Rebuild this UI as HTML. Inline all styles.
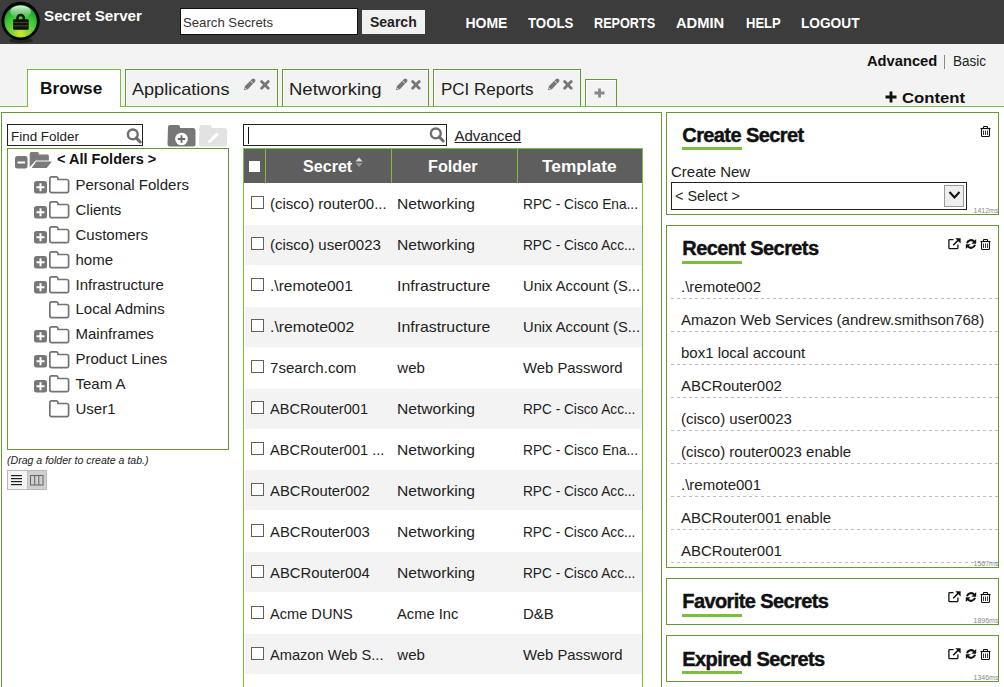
<!DOCTYPE html>
<html><head><meta charset="utf-8"><title>Secret Server</title>
<style>
html,body{margin:0;padding:0}
body{width:1004px;height:687px;overflow:hidden;position:relative;background:#fff;font-family:"Liberation Sans",sans-serif;color:#222}
.a{position:absolute;white-space:nowrap;line-height:1}
.b{position:absolute;display:block}
</style></head><body>
<div class="b" style="left:0px;top:0px;width:1004px;height:44px;background:#3c3c3c"></div>
<svg class="b" style="left:0px;top:0px" width="44" height="46" viewBox="0 0 44 46">
<defs><radialGradient id="lg" cx="50%" cy="88%" r="75%"><stop offset="0" stop-color="#d8ea20"/><stop offset="0.3" stop-color="#8ad63a"/><stop offset="0.7" stop-color="#3cc83a"/><stop offset="1" stop-color="#22a52a"/></radialGradient>
<linearGradient id="hl" x1="0" y1="0" x2="0" y2="1"><stop offset="0" stop-color="#fff" stop-opacity="0.85"/><stop offset="1" stop-color="#fff" stop-opacity="0"/></linearGradient></defs>
<ellipse cx="21" cy="40.5" rx="12" ry="2.5" fill="#222"/>
<circle cx="20.6" cy="21" r="19.2" fill="#050505"/>
<circle cx="20.6" cy="21.2" r="16.2" fill="url(#lg)"/>
<ellipse cx="20.6" cy="11.8" rx="10.5" ry="6.3" fill="url(#hl)"/>
<path d="M17.45 20 V18.25 A3.2 3.2 0 0 1 23.85 18.25 V20" fill="none" stroke="#111" stroke-width="2.5"/>
<rect x="13.1" y="19.3" width="15.6" height="10.5" fill="#111" rx="1.2"/>
<rect x="13.1" y="22.1" width="15.6" height="0.8" fill="#3d5a18"/>
<rect x="13.1" y="25.5" width="15.6" height="0.8" fill="#4a6a1a"/>
</svg>
<div class="a" style="left:44.40px;top:8.10px;font-size:15px;font-weight:bold;color:#fff;font-style:normal;letter-spacing:0px;transform:scaleX(1.012396694214876);transform-origin:0 0;">Secret Server</div>
<div class="b" style="left:180px;top:8px;width:178px;height:27px;background:#fff;border:1px solid #111;box-sizing:border-box"></div>
<div class="a" style="left:183.20px;top:15.70px;font-size:13px;font-weight:normal;color:#333;font-style:normal;letter-spacing:0px;transform:scaleX(1.012373453318335);transform-origin:0 0;">Search Secrets</div>
<div class="b" style="left:362px;top:10px;width:63px;height:24px;background:#f1f1f1"></div>
<div class="a" style="left:370.00px;top:15.15px;font-size:14px;font-weight:bold;color:#222;font-style:normal;letter-spacing:0px;">Search</div>
<div class="a" style="left:465.40px;top:16.05px;font-size:14px;font-weight:bold;color:#fff;font-style:normal;letter-spacing:0px;">HOME</div>
<div class="a" style="left:528.30px;top:16.05px;font-size:14px;font-weight:bold;color:#fff;font-style:normal;letter-spacing:0px;transform:scaleX(0.9458333333333333);transform-origin:0 0;">TOOLS</div>
<div class="a" style="left:594.40px;top:16.05px;font-size:14px;font-weight:bold;color:#fff;font-style:normal;letter-spacing:0px;transform:scaleX(0.9039881831610045);transform-origin:0 0;">REPORTS</div>
<div class="a" style="left:676.30px;top:16.05px;font-size:14px;font-weight:bold;color:#fff;font-style:normal;letter-spacing:0px;transform:scaleX(1.0501089324618738);transform-origin:0 0;">ADMIN</div>
<div class="a" style="left:745.70px;top:16.05px;font-size:14px;font-weight:bold;color:#fff;font-style:normal;letter-spacing:0px;transform:scaleX(0.93029490616622);transform-origin:0 0;">HELP</div>
<div class="a" style="left:800.70px;top:16.05px;font-size:14px;font-weight:bold;color:#fff;font-style:normal;letter-spacing:0px;transform:scaleX(0.9766277128547579);transform-origin:0 0;">LOGOUT</div>
<div class="b" style="left:0px;top:44px;width:1004px;height:62px;background:#f3f3f3"></div>
<div class="b" style="left:0px;top:106px;width:1004px;height:1px;background:#79bf3d"></div>
<div class="b" style="left:27px;top:69px;width:94px;height:38px;background:#fff;border:1px solid #79bf3d;border-bottom:none;box-sizing:border-box"></div>
<div class="a" style="left:40.30px;top:80.41px;font-size:17px;font-weight:bold;color:#111;font-style:normal;letter-spacing:0px;transform:scaleX(1.013029315960912);transform-origin:0 0;">Browse</div>
<div class="b" style="left:125px;top:69px;width:153px;height:37px;background:#f3f3f3;border:1px solid #649936;border-bottom:none;box-sizing:border-box;box-shadow:inset 1px 1px 0 #fff"></div>
<div class="a" style="left:132.20px;top:80.61px;font-size:17px;font-weight:normal;color:#222;font-style:normal;letter-spacing:0px;transform:scaleX(1.0632497273718649);transform-origin:0 0;">Applications</div>
<svg class="b" style="left:243.0px;top:78px" width="13" height="13" viewBox="0 0 13 13"><path d="M1 12.2 L1.8 8.2 L8.8 1.2 Q10.2 -0.2 11.6 1.1 Q13.1 2.6 11.8 4 L4.8 11.2 Z" fill="#777"/><path d="M7.3 2.6 L10.4 5.7" stroke="#f2f2f2" stroke-width="0.9"/><path d="M1.9 9.8 L3.4 11.3" stroke="#f2f2f2" stroke-width="1"/></svg>
<svg class="b" style="left:259.8px;top:79.8px" width="10" height="10" viewBox="0 0 10 10"><path d="M1.6 1.6 L8.2 8.2 M8.2 1.6 L1.6 8.2" stroke="#777" stroke-width="2.8" stroke-linecap="round"/></svg>
<div class="b" style="left:282px;top:69px;width:147px;height:37px;background:#f3f3f3;border:1px solid #649936;border-bottom:none;box-sizing:border-box;box-shadow:inset 1px 1px 0 #fff"></div>
<div class="a" style="left:289.40px;top:80.61px;font-size:17px;font-weight:normal;color:#222;font-style:normal;letter-spacing:0px;transform:scaleX(1.0894117647058823);transform-origin:0 0;">Networking</div>
<svg class="b" style="left:394.5px;top:78px" width="13" height="13" viewBox="0 0 13 13"><path d="M1 12.2 L1.8 8.2 L8.8 1.2 Q10.2 -0.2 11.6 1.1 Q13.1 2.6 11.8 4 L4.8 11.2 Z" fill="#777"/><path d="M7.3 2.6 L10.4 5.7" stroke="#f2f2f2" stroke-width="0.9"/><path d="M1.9 9.8 L3.4 11.3" stroke="#f2f2f2" stroke-width="1"/></svg>
<svg class="b" style="left:411.3px;top:79.8px" width="10" height="10" viewBox="0 0 10 10"><path d="M1.6 1.6 L8.2 8.2 M8.2 1.6 L1.6 8.2" stroke="#777" stroke-width="2.8" stroke-linecap="round"/></svg>
<div class="b" style="left:433px;top:69px;width:148px;height:37px;background:#f3f3f3;border:1px solid #649936;border-bottom:none;box-sizing:border-box;box-shadow:inset 1px 1px 0 #fff"></div>
<div class="a" style="left:441.00px;top:80.61px;font-size:17px;font-weight:normal;color:#222;font-style:normal;letter-spacing:0px;">PCI Reports</div>
<svg class="b" style="left:546.5px;top:78px" width="13" height="13" viewBox="0 0 13 13"><path d="M1 12.2 L1.8 8.2 L8.8 1.2 Q10.2 -0.2 11.6 1.1 Q13.1 2.6 11.8 4 L4.8 11.2 Z" fill="#777"/><path d="M7.3 2.6 L10.4 5.7" stroke="#f2f2f2" stroke-width="0.9"/><path d="M1.9 9.8 L3.4 11.3" stroke="#f2f2f2" stroke-width="1"/></svg>
<svg class="b" style="left:563.3px;top:79.8px" width="10" height="10" viewBox="0 0 10 10"><path d="M1.6 1.6 L8.2 8.2 M8.2 1.6 L1.6 8.2" stroke="#777" stroke-width="2.8" stroke-linecap="round"/></svg>
<div class="b" style="left:585px;top:79px;width:32px;height:27px;background:#f3f3f3;border:1px solid #649936;border-bottom:none;box-sizing:border-box;box-shadow:inset 1px 1px 0 #fff"></div>
<svg class="b" style="left:594px;top:88px" width="11" height="10" viewBox="0 0 11 10"><path d="M5.5 0.5 V9.5 M0.5 5 H10.5" stroke="#888" stroke-width="2.8"/></svg>
<div class="a" style="left:866.50px;top:53.95px;font-size:14px;font-weight:bold;color:#111;font-style:normal;letter-spacing:0px;transform:scaleX(1.0493273542600896);transform-origin:0 0;">Advanced</div>
<div class="b" style="left:944px;top:55px;width:1px;height:14px;background:#888"></div>
<div class="a" style="left:952.50px;top:53.95px;font-size:14px;font-weight:normal;color:#222;font-style:normal;letter-spacing:0px;transform:scaleX(0.9649122807017543);transform-origin:0 0;">Basic</div>
<svg class="b" style="left:885px;top:91px" width="12" height="12" viewBox="0 0 12 12"><path d="M6 0.5 V11.5 M0.5 6 H11.5" stroke="#111" stroke-width="2.8"/></svg>
<div class="a" style="left:902.30px;top:89.70px;font-size:15px;font-weight:bold;color:#111;font-style:normal;letter-spacing:0px;transform:scaleX(1.1128747795414462);transform-origin:0 0;">Content</div>
<div class="b" style="left:1px;top:112px;width:661px;height:600px;border:1px solid #649936;box-sizing:border-box"></div>
<div class="b" style="left:7px;top:124px;width:136px;height:22px;background:#fff;border:1px solid #222;box-sizing:border-box"></div>
<div class="a" style="left:10.50px;top:129.60px;font-size:13px;font-weight:normal;color:#222;font-style:normal;letter-spacing:0px;transform:scaleX(1.033434650455927);transform-origin:0 0;">Find Folder</div>
<svg class="b" style="left:125px;top:127px" width="17" height="17" viewBox="0 0 17 17"><circle cx="7.8" cy="7.4" r="4.9" fill="none" stroke="#6e6e6e" stroke-width="2.4"/><path d="M11.2 10.9 L15.2 15" stroke="#6e6e6e" stroke-width="3" stroke-linecap="round"/></svg>
<svg class="b" style="left:167px;top:124px" width="29" height="23" viewBox="0 0 29 23"><path d="M1 3 a2 2 0 0 1 2-2 h8 a2 2 0 0 1 2 2 v1 h13 a2.5 2.5 0 0 1 2.5 2.5 v13.5 a2.5 2.5 0 0 1 -2.5 2.5 h-23 a2.5 2.5 0 0 1 -2.5 -2.5 Z" fill="#777"/><circle cx="14.5" cy="15" r="6.3" fill="#fff"/><path d="M14.5 11.3 V18.7 M10.8 15 H18.2" stroke="#666" stroke-width="1.8"/></svg>
<svg class="b" style="left:199px;top:124px" width="28" height="23" viewBox="0 0 28 23"><path d="M0.5 3 a2 2 0 0 1 2-2 h8 a2 2 0 0 1 2 2 v1 h13 a2.5 2.5 0 0 1 2.5 2.5 v13.5 a2.5 2.5 0 0 1 -2.5 2.5 h-23 a2.5 2.5 0 0 1 -2.5 -2.5 Z" fill="#e2e2e2"/><path d="M9 19 L9.6 16.3 L17.5 8.4 L19.8 10.7 L11.9 18.6 Z" fill="#fff"/></svg>
<div class="b" style="left:7px;top:148px;width:222px;height:302px;border:1px solid #649936;box-sizing:border-box"></div>
<svg class="b" style="left:15px;top:156px" width="13" height="13" viewBox="0 0 13 13"><rect x="0" y="0" width="12.5" height="12.5" rx="2.5" fill="#777"/><path d="M2.5 6.5 H10" stroke="#fff" stroke-width="2"/></svg>
<svg class="b" style="left:29px;top:151px" width="25" height="19" viewBox="0 0 25 19"><path d="M0.7 2.6 a1.6 1.6 0 0 1 1.6-1.6 h5.9 a1.6 1.6 0 0 1 1.6 1.6 v0.9 h8.5 a1.6 1.6 0 0 1 1.6 1.6 v5.5 H6 L0.7 16 Z" fill="#7b7b7b"/><path d="M1.6 17.6 L6.8 10 H23.9 L18 17.6 Z" fill="#7b7b7b" stroke="#fff" stroke-width="1.1" stroke-linejoin="round"/></svg>
<div class="a" style="left:56.70px;top:152.43px;font-size:14.5px;font-weight:bold;color:#111;font-style:normal;letter-spacing:0px;transform:scaleX(0.9979879275653923);transform-origin:0 0;">&lt; All Folders &gt;</div>
<svg class="b" style="left:34px;top:181px" width="14" height="13" viewBox="0 0 14 13"><rect x="0" y="0" width="13" height="12.5" rx="2.5" fill="#777"/><path d="M6.5 2.3 V10.3 M2.5 6.3 H10.5" stroke="#fff" stroke-width="2"/></svg>
<svg class="b" style="left:49px;top:176px" width="21" height="18" viewBox="0 0 21 18"><path d="M0.85 2.6 a1.75 1.75 0 0 1 1.75-1.75 h4.6 a1.75 1.75 0 0 1 1.75 1.75 v0.9 h8.9 a1.75 1.75 0 0 1 1.75 1.75 v9.6 a1.75 1.75 0 0 1 -1.75 1.75 h-15.25 a1.75 1.75 0 0 1 -1.75 -1.75 Z" fill="#fff" stroke="#737373" stroke-width="1.7"/></svg>
<div class="a" style="left:75.50px;top:177.10px;font-size:15px;font-weight:normal;color:#222;font-style:normal;letter-spacing:0px;">Personal Folders</div>
<svg class="b" style="left:34px;top:206px" width="14" height="13" viewBox="0 0 14 13"><rect x="0" y="0" width="13" height="12.5" rx="2.5" fill="#777"/><path d="M6.5 2.3 V10.3 M2.5 6.3 H10.5" stroke="#fff" stroke-width="2"/></svg>
<svg class="b" style="left:49px;top:201px" width="21" height="18" viewBox="0 0 21 18"><path d="M0.85 2.6 a1.75 1.75 0 0 1 1.75-1.75 h4.6 a1.75 1.75 0 0 1 1.75 1.75 v0.9 h8.9 a1.75 1.75 0 0 1 1.75 1.75 v9.6 a1.75 1.75 0 0 1 -1.75 1.75 h-15.25 a1.75 1.75 0 0 1 -1.75 -1.75 Z" fill="#fff" stroke="#737373" stroke-width="1.7"/></svg>
<div class="a" style="left:75.50px;top:201.96px;font-size:15px;font-weight:normal;color:#222;font-style:normal;letter-spacing:0px;">Clients</div>
<svg class="b" style="left:34px;top:231px" width="14" height="13" viewBox="0 0 14 13"><rect x="0" y="0" width="13" height="12.5" rx="2.5" fill="#777"/><path d="M6.5 2.3 V10.3 M2.5 6.3 H10.5" stroke="#fff" stroke-width="2"/></svg>
<svg class="b" style="left:49px;top:226px" width="21" height="18" viewBox="0 0 21 18"><path d="M0.85 2.6 a1.75 1.75 0 0 1 1.75-1.75 h4.6 a1.75 1.75 0 0 1 1.75 1.75 v0.9 h8.9 a1.75 1.75 0 0 1 1.75 1.75 v9.6 a1.75 1.75 0 0 1 -1.75 1.75 h-15.25 a1.75 1.75 0 0 1 -1.75 -1.75 Z" fill="#fff" stroke="#737373" stroke-width="1.7"/></svg>
<div class="a" style="left:75.50px;top:226.82px;font-size:15px;font-weight:normal;color:#222;font-style:normal;letter-spacing:0px;">Customers</div>
<svg class="b" style="left:34px;top:256px" width="14" height="13" viewBox="0 0 14 13"><rect x="0" y="0" width="13" height="12.5" rx="2.5" fill="#777"/><path d="M6.5 2.3 V10.3 M2.5 6.3 H10.5" stroke="#fff" stroke-width="2"/></svg>
<svg class="b" style="left:49px;top:251px" width="21" height="18" viewBox="0 0 21 18"><path d="M0.85 2.6 a1.75 1.75 0 0 1 1.75-1.75 h4.6 a1.75 1.75 0 0 1 1.75 1.75 v0.9 h8.9 a1.75 1.75 0 0 1 1.75 1.75 v9.6 a1.75 1.75 0 0 1 -1.75 1.75 h-15.25 a1.75 1.75 0 0 1 -1.75 -1.75 Z" fill="#fff" stroke="#737373" stroke-width="1.7"/></svg>
<div class="a" style="left:75.50px;top:251.68px;font-size:15px;font-weight:normal;color:#222;font-style:normal;letter-spacing:0px;">home</div>
<svg class="b" style="left:34px;top:281px" width="14" height="13" viewBox="0 0 14 13"><rect x="0" y="0" width="13" height="12.5" rx="2.5" fill="#777"/><path d="M6.5 2.3 V10.3 M2.5 6.3 H10.5" stroke="#fff" stroke-width="2"/></svg>
<svg class="b" style="left:49px;top:276px" width="21" height="18" viewBox="0 0 21 18"><path d="M0.85 2.6 a1.75 1.75 0 0 1 1.75-1.75 h4.6 a1.75 1.75 0 0 1 1.75 1.75 v0.9 h8.9 a1.75 1.75 0 0 1 1.75 1.75 v9.6 a1.75 1.75 0 0 1 -1.75 1.75 h-15.25 a1.75 1.75 0 0 1 -1.75 -1.75 Z" fill="#fff" stroke="#737373" stroke-width="1.7"/></svg>
<div class="a" style="left:75.50px;top:276.54px;font-size:15px;font-weight:normal;color:#222;font-style:normal;letter-spacing:0px;">Infrastructure</div>
<svg class="b" style="left:49px;top:301px" width="21" height="18" viewBox="0 0 21 18"><path d="M0.85 2.6 a1.75 1.75 0 0 1 1.75-1.75 h4.6 a1.75 1.75 0 0 1 1.75 1.75 v0.9 h8.9 a1.75 1.75 0 0 1 1.75 1.75 v9.6 a1.75 1.75 0 0 1 -1.75 1.75 h-15.25 a1.75 1.75 0 0 1 -1.75 -1.75 Z" fill="#fff" stroke="#737373" stroke-width="1.7"/></svg>
<div class="a" style="left:75.50px;top:301.40px;font-size:15px;font-weight:normal;color:#222;font-style:normal;letter-spacing:0px;">Local Admins</div>
<svg class="b" style="left:34px;top:330px" width="14" height="13" viewBox="0 0 14 13"><rect x="0" y="0" width="13" height="12.5" rx="2.5" fill="#777"/><path d="M6.5 2.3 V10.3 M2.5 6.3 H10.5" stroke="#fff" stroke-width="2"/></svg>
<svg class="b" style="left:49px;top:326px" width="21" height="18" viewBox="0 0 21 18"><path d="M0.85 2.6 a1.75 1.75 0 0 1 1.75-1.75 h4.6 a1.75 1.75 0 0 1 1.75 1.75 v0.9 h8.9 a1.75 1.75 0 0 1 1.75 1.75 v9.6 a1.75 1.75 0 0 1 -1.75 1.75 h-15.25 a1.75 1.75 0 0 1 -1.75 -1.75 Z" fill="#fff" stroke="#737373" stroke-width="1.7"/></svg>
<div class="a" style="left:75.50px;top:326.26px;font-size:15px;font-weight:normal;color:#222;font-style:normal;letter-spacing:0px;">Mainframes</div>
<svg class="b" style="left:34px;top:355px" width="14" height="13" viewBox="0 0 14 13"><rect x="0" y="0" width="13" height="12.5" rx="2.5" fill="#777"/><path d="M6.5 2.3 V10.3 M2.5 6.3 H10.5" stroke="#fff" stroke-width="2"/></svg>
<svg class="b" style="left:49px;top:351px" width="21" height="18" viewBox="0 0 21 18"><path d="M0.85 2.6 a1.75 1.75 0 0 1 1.75-1.75 h4.6 a1.75 1.75 0 0 1 1.75 1.75 v0.9 h8.9 a1.75 1.75 0 0 1 1.75 1.75 v9.6 a1.75 1.75 0 0 1 -1.75 1.75 h-15.25 a1.75 1.75 0 0 1 -1.75 -1.75 Z" fill="#fff" stroke="#737373" stroke-width="1.7"/></svg>
<div class="a" style="left:75.50px;top:351.12px;font-size:15px;font-weight:normal;color:#222;font-style:normal;letter-spacing:0px;">Product Lines</div>
<svg class="b" style="left:34px;top:380px" width="14" height="13" viewBox="0 0 14 13"><rect x="0" y="0" width="13" height="12.5" rx="2.5" fill="#777"/><path d="M6.5 2.3 V10.3 M2.5 6.3 H10.5" stroke="#fff" stroke-width="2"/></svg>
<svg class="b" style="left:49px;top:375px" width="21" height="18" viewBox="0 0 21 18"><path d="M0.85 2.6 a1.75 1.75 0 0 1 1.75-1.75 h4.6 a1.75 1.75 0 0 1 1.75 1.75 v0.9 h8.9 a1.75 1.75 0 0 1 1.75 1.75 v9.6 a1.75 1.75 0 0 1 -1.75 1.75 h-15.25 a1.75 1.75 0 0 1 -1.75 -1.75 Z" fill="#fff" stroke="#737373" stroke-width="1.7"/></svg>
<div class="a" style="left:75.50px;top:375.98px;font-size:15px;font-weight:normal;color:#222;font-style:normal;letter-spacing:0px;">Team A</div>
<svg class="b" style="left:49px;top:400px" width="21" height="18" viewBox="0 0 21 18"><path d="M0.85 2.6 a1.75 1.75 0 0 1 1.75-1.75 h4.6 a1.75 1.75 0 0 1 1.75 1.75 v0.9 h8.9 a1.75 1.75 0 0 1 1.75 1.75 v9.6 a1.75 1.75 0 0 1 -1.75 1.75 h-15.25 a1.75 1.75 0 0 1 -1.75 -1.75 Z" fill="#fff" stroke="#737373" stroke-width="1.7"/></svg>
<div class="a" style="left:75.50px;top:400.84px;font-size:15px;font-weight:normal;color:#222;font-style:normal;letter-spacing:0px;">User1</div>
<div class="a" style="left:7.30px;top:454.71px;font-size:10.5px;font-weight:normal;color:#222;font-style:italic;letter-spacing:0px;transform:scaleX(1.0063965884861408);transform-origin:0 0;">(Drag a folder to create a tab.)</div>
<div class="b" style="left:7px;top:470px;width:40px;height:20px;background:#cfcfcf;border:1px solid #b8b8b8;box-sizing:border-box"></div>
<div class="b" style="left:8px;top:471px;width:19px;height:18px;background:#f4f4f4"></div>
<div class="b" style="left:27px;top:471px;width:1px;height:18px;background:#c0c0c0"></div>
<svg class="b" style="left:11px;top:474px" width="12" height="12" viewBox="0 0 12 12"><rect x="0" y="1" width="11" height="1.2" fill="#222"/><rect x="0" y="4" width="11" height="1.2" fill="#222"/><rect x="0" y="7" width="11" height="1.2" fill="#222"/><rect x="0" y="10" width="11" height="1.2" fill="#222"/></svg>
<svg class="b" style="left:30px;top:475px" width="14" height="11" viewBox="0 0 14 11"><rect x="0.5" y="0.5" width="12.5" height="9.5" fill="none" stroke="#666" stroke-width="1"/><path d="M4.7 0.5 V10 M8.8 0.5 V10" stroke="#666" stroke-width="1"/></svg>
<div class="b" style="left:243px;top:124px;width:204px;height:22px;background:#fff;border:1px solid #222;box-sizing:border-box"></div>
<div class="b" style="left:248px;top:127px;width:1px;height:17px;background:#111"></div>
<svg class="b" style="left:428px;top:126px" width="17" height="17" viewBox="0 0 17 17"><circle cx="7.8" cy="7.4" r="4.9" fill="none" stroke="#6e6e6e" stroke-width="2.4"/><path d="M11.2 10.9 L15.2 15" stroke="#6e6e6e" stroke-width="3" stroke-linecap="round"/></svg>
<div class="a" style="left:454.50px;top:128.30px;font-size:15px;font-weight:normal;color:#222;font-style:normal;letter-spacing:0px;text-decoration:underline;">Advanced</div>
<div class="b" style="left:243px;top:148px;width:400px;height:600px;border:1px solid #79bf3d;border-bottom:none;box-sizing:border-box"></div>
<div class="b" style="left:244px;top:149px;width:398px;height:34px;background:#5e5e5e"></div>
<div class="b" style="left:265px;top:149px;width:1px;height:34px;background:#79bf3d"></div>
<div class="b" style="left:391px;top:149px;width:1px;height:34px;background:#79bf3d"></div>
<div class="b" style="left:517px;top:149px;width:1px;height:34px;background:#79bf3d"></div>
<div class="b" style="left:249px;top:161px;width:11px;height:11px;background:#fff"></div>
<div class="a" style="left:302.80px;top:159.46px;font-size:16px;font-weight:bold;color:#fff;font-style:normal;letter-spacing:0px;transform:scaleX(1.0061349693251536);transform-origin:0 0;">Secret</div>
<svg class="b" style="left:355px;top:157px" width="8" height="11" viewBox="0 0 8 11"><path d="M4 0.5 L7.5 4.5 H0.5 Z" fill="#ddd"/><path d="M0.5 6 H7.5 L4 10 Z" fill="#999"/></svg>
<div class="a" style="left:428.30px;top:159.46px;font-size:16px;font-weight:bold;color:#fff;font-style:normal;letter-spacing:0px;transform:scaleX(1.0143149284253579);transform-origin:0 0;">Folder</div>
<div class="a" style="left:542.00px;top:159.46px;font-size:16px;font-weight:bold;color:#fff;font-style:normal;letter-spacing:0px;transform:scaleX(1.0795947901591896);transform-origin:0 0;">Template</div>
<div class="b" style="left:251px;top:196px;width:13px;height:13px;background:#fff;border:1px solid #606060;box-sizing:border-box"></div>
<div class="a" style="left:270.00px;top:196.30px;font-size:15px;font-weight:normal;color:#222;font-style:normal;letter-spacing:0px;">(cisco) router00...</div>
<div class="a" style="left:397.30px;top:196.30px;font-size:15px;font-weight:normal;color:#222;font-style:normal;letter-spacing:0px;transform:scaleX(1.0395614350196012);transform-origin:0 0;">Networking</div>
<div class="a" style="left:523.00px;top:196.30px;font-size:15px;font-weight:normal;color:#222;font-style:normal;letter-spacing:0px;transform:scaleX(0.9134233518665608);transform-origin:0 0;">RPC - Cisco Ena...</div>
<div class="b" style="left:245px;top:225px;width:397px;height:40px;background:#f3f3f3"></div>
<div class="b" style="left:251px;top:237px;width:13px;height:13px;background:#fff;border:1px solid #606060;box-sizing:border-box"></div>
<div class="a" style="left:270.00px;top:237.30px;font-size:15px;font-weight:normal;color:#222;font-style:normal;letter-spacing:0px;">(cisco) user0023</div>
<div class="a" style="left:397.30px;top:237.30px;font-size:15px;font-weight:normal;color:#222;font-style:normal;letter-spacing:0px;transform:scaleX(1.0395614350196012);transform-origin:0 0;">Networking</div>
<div class="a" style="left:523.00px;top:237.30px;font-size:15px;font-weight:normal;color:#222;font-style:normal;letter-spacing:0px;transform:scaleX(0.9108589951377634);transform-origin:0 0;">RPC - Cisco Acc...</div>
<div class="b" style="left:251px;top:278px;width:13px;height:13px;background:#fff;border:1px solid #606060;box-sizing:border-box"></div>
<div class="a" style="left:270.00px;top:278.30px;font-size:15px;font-weight:normal;color:#222;font-style:normal;letter-spacing:0px;transform:scaleX(1.0356229626593274);transform-origin:0 0;">.\remote001</div>
<div class="a" style="left:397.30px;top:278.30px;font-size:15px;font-weight:normal;color:#222;font-style:normal;letter-spacing:0px;transform:scaleX(1.0569347195699836);transform-origin:0 0;">Infrastructure</div>
<div class="a" style="left:523.00px;top:278.30px;font-size:15px;font-weight:normal;color:#222;font-style:normal;letter-spacing:0px;transform:scaleX(0.9815436241610738);transform-origin:0 0;">Unix Account (S...</div>
<div class="b" style="left:245px;top:307px;width:397px;height:40px;background:#f3f3f3"></div>
<div class="b" style="left:251px;top:319px;width:13px;height:13px;background:#fff;border:1px solid #606060;box-sizing:border-box"></div>
<div class="a" style="left:270.00px;top:319.30px;font-size:15px;font-weight:normal;color:#222;font-style:normal;letter-spacing:0px;transform:scaleX(1.0543616169897132);transform-origin:0 0;">.\remote002</div>
<div class="a" style="left:397.30px;top:319.30px;font-size:15px;font-weight:normal;color:#222;font-style:normal;letter-spacing:0px;transform:scaleX(1.0569347195699836);transform-origin:0 0;">Infrastructure</div>
<div class="a" style="left:523.00px;top:319.30px;font-size:15px;font-weight:normal;color:#222;font-style:normal;letter-spacing:0px;transform:scaleX(0.9815436241610738);transform-origin:0 0;">Unix Account (S...</div>
<div class="b" style="left:251px;top:360px;width:13px;height:13px;background:#fff;border:1px solid #606060;box-sizing:border-box"></div>
<div class="a" style="left:270.00px;top:360.30px;font-size:15px;font-weight:normal;color:#222;font-style:normal;letter-spacing:0px;transform:scaleX(1.0061547279501073);transform-origin:0 0;">7search.com</div>
<div class="a" style="left:397.30px;top:360.30px;font-size:15px;font-weight:normal;color:#222;font-style:normal;letter-spacing:0px;">web</div>
<div class="a" style="left:523.00px;top:360.30px;font-size:15px;font-weight:normal;color:#222;font-style:normal;letter-spacing:0px;transform:scaleX(0.9900596421471173);transform-origin:0 0;">Web Password</div>
<div class="b" style="left:245px;top:389px;width:397px;height:40px;background:#f3f3f3"></div>
<div class="b" style="left:251px;top:401px;width:13px;height:13px;background:#fff;border:1px solid #606060;box-sizing:border-box"></div>
<div class="a" style="left:270.00px;top:401.30px;font-size:15px;font-weight:normal;color:#222;font-style:normal;letter-spacing:0px;transform:scaleX(0.9713075562059847);transform-origin:0 0;">ABCRouter001</div>
<div class="a" style="left:397.30px;top:401.30px;font-size:15px;font-weight:normal;color:#222;font-style:normal;letter-spacing:0px;transform:scaleX(1.0395614350196012);transform-origin:0 0;">Networking</div>
<div class="a" style="left:523.00px;top:401.30px;font-size:15px;font-weight:normal;color:#222;font-style:normal;letter-spacing:0px;transform:scaleX(0.9108589951377634);transform-origin:0 0;">RPC - Cisco Acc...</div>
<div class="b" style="left:251px;top:442px;width:13px;height:13px;background:#fff;border:1px solid #606060;box-sizing:border-box"></div>
<div class="a" style="left:270.00px;top:442.30px;font-size:15px;font-weight:normal;color:#222;font-style:normal;letter-spacing:0px;transform:scaleX(0.9730897153470693);transform-origin:0 0;">ABCRouter001 ...</div>
<div class="a" style="left:397.30px;top:442.30px;font-size:15px;font-weight:normal;color:#222;font-style:normal;letter-spacing:0px;transform:scaleX(1.0395614350196012);transform-origin:0 0;">Networking</div>
<div class="a" style="left:523.00px;top:442.30px;font-size:15px;font-weight:normal;color:#222;font-style:normal;letter-spacing:0px;transform:scaleX(0.9134233518665608);transform-origin:0 0;">RPC - Cisco Ena...</div>
<div class="b" style="left:245px;top:470px;width:397px;height:40px;background:#f3f3f3"></div>
<div class="b" style="left:251px;top:483px;width:13px;height:13px;background:#fff;border:1px solid #606060;box-sizing:border-box"></div>
<div class="a" style="left:270.00px;top:483.30px;font-size:15px;font-weight:normal;color:#222;font-style:normal;letter-spacing:0px;transform:scaleX(0.9891478990750743);transform-origin:0 0;">ABCRouter002</div>
<div class="a" style="left:397.30px;top:483.30px;font-size:15px;font-weight:normal;color:#222;font-style:normal;letter-spacing:0px;transform:scaleX(1.0395614350196012);transform-origin:0 0;">Networking</div>
<div class="a" style="left:523.00px;top:483.30px;font-size:15px;font-weight:normal;color:#222;font-style:normal;letter-spacing:0px;transform:scaleX(0.9108589951377634);transform-origin:0 0;">RPC - Cisco Acc...</div>
<div class="b" style="left:251px;top:524px;width:13px;height:13px;background:#fff;border:1px solid #606060;box-sizing:border-box"></div>
<div class="a" style="left:270.00px;top:524.30px;font-size:15px;font-weight:normal;color:#222;font-style:normal;letter-spacing:0px;transform:scaleX(0.9891478990750743);transform-origin:0 0;">ABCRouter003</div>
<div class="a" style="left:397.30px;top:524.30px;font-size:15px;font-weight:normal;color:#222;font-style:normal;letter-spacing:0px;transform:scaleX(1.0395614350196012);transform-origin:0 0;">Networking</div>
<div class="a" style="left:523.00px;top:524.30px;font-size:15px;font-weight:normal;color:#222;font-style:normal;letter-spacing:0px;transform:scaleX(0.9108589951377634);transform-origin:0 0;">RPC - Cisco Acc...</div>
<div class="b" style="left:245px;top:552px;width:397px;height:40px;background:#f3f3f3"></div>
<div class="b" style="left:251px;top:565px;width:13px;height:13px;background:#fff;border:1px solid #606060;box-sizing:border-box"></div>
<div class="a" style="left:270.00px;top:565.30px;font-size:15px;font-weight:normal;color:#222;font-style:normal;letter-spacing:0px;transform:scaleX(0.9891478990750743);transform-origin:0 0;">ABCRouter004</div>
<div class="a" style="left:397.30px;top:565.30px;font-size:15px;font-weight:normal;color:#222;font-style:normal;letter-spacing:0px;transform:scaleX(1.0395614350196012);transform-origin:0 0;">Networking</div>
<div class="a" style="left:523.00px;top:565.30px;font-size:15px;font-weight:normal;color:#222;font-style:normal;letter-spacing:0px;transform:scaleX(0.9108589951377634);transform-origin:0 0;">RPC - Cisco Acc...</div>
<div class="b" style="left:251px;top:606px;width:13px;height:13px;background:#fff;border:1px solid #606060;box-sizing:border-box"></div>
<div class="a" style="left:270.00px;top:606.30px;font-size:15px;font-weight:normal;color:#222;font-style:normal;letter-spacing:0px;transform:scaleX(0.9727712991297476);transform-origin:0 0;">Acme DUNS</div>
<div class="a" style="left:397.30px;top:606.30px;font-size:15px;font-weight:normal;color:#222;font-style:normal;letter-spacing:0px;transform:scaleX(0.9804752175841752);transform-origin:0 0;">Acme Inc</div>
<div class="a" style="left:523.00px;top:606.30px;font-size:15px;font-weight:normal;color:#222;font-style:normal;letter-spacing:0px;">D&amp;B</div>
<div class="b" style="left:245px;top:634px;width:397px;height:40px;background:#f3f3f3"></div>
<div class="b" style="left:251px;top:647px;width:13px;height:13px;background:#fff;border:1px solid #606060;box-sizing:border-box"></div>
<div class="a" style="left:270.00px;top:647.30px;font-size:15px;font-weight:normal;color:#222;font-style:normal;letter-spacing:0px;transform:scaleX(0.9747326328784401);transform-origin:0 0;">Amazon Web S...</div>
<div class="a" style="left:397.30px;top:647.30px;font-size:15px;font-weight:normal;color:#222;font-style:normal;letter-spacing:0px;">web</div>
<div class="a" style="left:523.00px;top:647.30px;font-size:15px;font-weight:normal;color:#222;font-style:normal;letter-spacing:0px;transform:scaleX(0.9900596421471173);transform-origin:0 0;">Web Password</div>
<div class="b" style="left:666px;top:112px;width:333px;height:103px;border:1px solid #649936;box-sizing:border-box;background:#fff"></div>
<div class="a" style="left:682.30px;top:124.97px;font-size:20px;font-weight:bold;color:#111;font-style:normal;letter-spacing:-0.6px;-webkit-text-stroke:0.45px #111;">Create Secret</div>
<div class="b" style="left:682px;top:147.4px;width:60px;height:3px;background:#79bf3d"></div>
<svg class="b" style="left:980px;top:125px" width="11" height="12" viewBox="0 0 11 12"><path d="M3.5 3 V1.5 H7.5 V3" fill="none" stroke="#111" stroke-width="1"/><path d="M0.5 3.5 H10.5" stroke="#111" stroke-width="1.2"/><path d="M1.5 4 V10.5 Q1.5 11.5 2.5 11.5 H8.5 Q9.5 11.5 9.5 10.5 V4" fill="none" stroke="#111" stroke-width="1.1"/><path d="M3.5 5.5 V10 M5.5 5.5 V10 M7.5 5.5 V10" stroke="#222" stroke-width="0.9"/></svg>
<div class="a" style="left:671.00px;top:164.10px;font-size:15px;font-weight:normal;color:#222;font-style:normal;letter-spacing:0px;">Create New</div>
<div class="b" style="left:671px;top:182px;width:296px;height:28px;background:#fff;border:1px solid #222;box-sizing:border-box"></div>
<div class="a" style="left:675.40px;top:188.30px;font-size:15px;font-weight:normal;color:#222;font-style:normal;letter-spacing:0px;transform:scaleX(0.9629629629629629);transform-origin:0 0;">&lt; Select &gt;</div>
<div class="b" style="left:944px;top:185px;width:20px;height:22px;background:#eee;border:1px solid #999;box-sizing:border-box"></div>
<svg class="b" style="left:947.5px;top:190px" width="13" height="10" viewBox="0 0 13 10"><path d="M1.5 2 L6.5 7.5 L11.5 2" fill="none" stroke="#111" stroke-width="2"/></svg>
<div class="a" style="left:973.50px;top:207.07px;font-size:7px;font-weight:normal;color:#888;font-style:normal;letter-spacing:0px;">1412ms</div>
<div class="b" style="left:666px;top:225px;width:333px;height:343px;border:1px solid #649936;box-sizing:border-box;background:#fff"></div>
<div class="a" style="left:682.30px;top:238.07px;font-size:20px;font-weight:bold;color:#111;font-style:normal;letter-spacing:-0.6px;-webkit-text-stroke:0.45px #111;">Recent Secrets</div>
<div class="b" style="left:682px;top:260.5px;width:60px;height:3px;background:#79bf3d"></div>
<svg class="b" style="left:948px;top:238px" width="14" height="12" viewBox="0 0 14 12"><path d="M5.5 1.6 H1.8 Q0.9 1.6 0.9 2.5 V9.8 Q0.9 10.7 1.8 10.7 H9 Q9.9 10.7 9.9 9.8 V6.5" fill="none" stroke="#111" stroke-width="1.3"/><path d="M5.2 7.2 L10.5 1.9" stroke="#111" stroke-width="1.5"/><path d="M7.3 0.2 H12.6 V5.5 Z" fill="#111"/></svg>
<svg class="b" style="left:964.5px;top:238px" width="12" height="12" viewBox="0 0 12 12"><path d="M2 5.2 A4.2 4.2 0 0 1 9.2 3.6" fill="none" stroke="#111" stroke-width="2.1"/><path d="M11.2 1 V5.8 H6.4 Z" fill="#111"/><path d="M10 6.8 A4.2 4.2 0 0 1 2.8 8.4" fill="none" stroke="#111" stroke-width="2.1"/><path d="M0.8 11 V6.2 H5.6 Z" fill="#111"/></svg>
<svg class="b" style="left:980px;top:238px" width="11" height="12" viewBox="0 0 11 12"><path d="M3.5 3 V1.5 H7.5 V3" fill="none" stroke="#111" stroke-width="1"/><path d="M0.5 3.5 H10.5" stroke="#111" stroke-width="1.2"/><path d="M1.5 4 V10.5 Q1.5 11.5 2.5 11.5 H8.5 Q9.5 11.5 9.5 10.5 V4" fill="none" stroke="#111" stroke-width="1.1"/><path d="M3.5 5.5 V10 M5.5 5.5 V10 M7.5 5.5 V10" stroke="#222" stroke-width="0.9"/></svg>
<div class="a" style="left:681.00px;top:279.30px;font-size:15px;font-weight:normal;color:#222;font-style:normal;letter-spacing:0px;">.\remote002</div>
<div class="b" style="left:671px;top:298px;width:327px;height:1px;background:repeating-linear-gradient(90deg,#bbb 0 3px,transparent 3px 6px)"></div>
<div class="a" style="left:681.00px;top:312.30px;font-size:15px;font-weight:normal;color:#222;font-style:normal;letter-spacing:0px;">Amazon Web Services (andrew.smithson768)</div>
<div class="b" style="left:671px;top:331px;width:327px;height:1px;background:repeating-linear-gradient(90deg,#bbb 0 3px,transparent 3px 6px)"></div>
<div class="a" style="left:681.00px;top:345.30px;font-size:15px;font-weight:normal;color:#222;font-style:normal;letter-spacing:0px;">box1 local account</div>
<div class="b" style="left:671px;top:364px;width:327px;height:1px;background:repeating-linear-gradient(90deg,#bbb 0 3px,transparent 3px 6px)"></div>
<div class="a" style="left:681.00px;top:378.30px;font-size:15px;font-weight:normal;color:#222;font-style:normal;letter-spacing:0px;">ABCRouter002</div>
<div class="b" style="left:671px;top:397px;width:327px;height:1px;background:repeating-linear-gradient(90deg,#bbb 0 3px,transparent 3px 6px)"></div>
<div class="a" style="left:681.00px;top:411.30px;font-size:15px;font-weight:normal;color:#222;font-style:normal;letter-spacing:0px;">(cisco) user0023</div>
<div class="b" style="left:671px;top:430px;width:327px;height:1px;background:repeating-linear-gradient(90deg,#bbb 0 3px,transparent 3px 6px)"></div>
<div class="a" style="left:681.00px;top:444.30px;font-size:15px;font-weight:normal;color:#222;font-style:normal;letter-spacing:0px;">(cisco) router0023 enable</div>
<div class="b" style="left:671px;top:463px;width:327px;height:1px;background:repeating-linear-gradient(90deg,#bbb 0 3px,transparent 3px 6px)"></div>
<div class="a" style="left:681.00px;top:477.30px;font-size:15px;font-weight:normal;color:#222;font-style:normal;letter-spacing:0px;">.\remote001</div>
<div class="b" style="left:671px;top:496px;width:327px;height:1px;background:repeating-linear-gradient(90deg,#bbb 0 3px,transparent 3px 6px)"></div>
<div class="a" style="left:681.00px;top:510.30px;font-size:15px;font-weight:normal;color:#222;font-style:normal;letter-spacing:0px;">ABCRouter001 enable</div>
<div class="b" style="left:671px;top:529px;width:327px;height:1px;background:repeating-linear-gradient(90deg,#bbb 0 3px,transparent 3px 6px)"></div>
<div class="a" style="left:681.00px;top:543.30px;font-size:15px;font-weight:normal;color:#222;font-style:normal;letter-spacing:0px;">ABCRouter001</div>
<div class="b" style="left:671px;top:562px;width:327px;height:1px;background:repeating-linear-gradient(90deg,#bbb 0 3px,transparent 3px 6px)"></div>
<div class="a" style="left:973.50px;top:560.07px;font-size:7px;font-weight:normal;color:#888;font-style:normal;letter-spacing:0px;">1567ms</div>
<div class="b" style="left:666px;top:578px;width:333px;height:47px;border:1px solid #649936;box-sizing:border-box;background:#fff"></div>
<div class="a" style="left:682.30px;top:591.47px;font-size:20px;font-weight:bold;color:#111;font-style:normal;letter-spacing:-0.6px;-webkit-text-stroke:0.45px #111;">Favorite Secrets</div>
<div class="b" style="left:682px;top:613.9px;width:60px;height:3px;background:#79bf3d"></div>
<svg class="b" style="left:948px;top:591px" width="14" height="12" viewBox="0 0 14 12"><path d="M5.5 1.6 H1.8 Q0.9 1.6 0.9 2.5 V9.8 Q0.9 10.7 1.8 10.7 H9 Q9.9 10.7 9.9 9.8 V6.5" fill="none" stroke="#111" stroke-width="1.3"/><path d="M5.2 7.2 L10.5 1.9" stroke="#111" stroke-width="1.5"/><path d="M7.3 0.2 H12.6 V5.5 Z" fill="#111"/></svg>
<svg class="b" style="left:964.5px;top:591px" width="12" height="12" viewBox="0 0 12 12"><path d="M2 5.2 A4.2 4.2 0 0 1 9.2 3.6" fill="none" stroke="#111" stroke-width="2.1"/><path d="M11.2 1 V5.8 H6.4 Z" fill="#111"/><path d="M10 6.8 A4.2 4.2 0 0 1 2.8 8.4" fill="none" stroke="#111" stroke-width="2.1"/><path d="M0.8 11 V6.2 H5.6 Z" fill="#111"/></svg>
<svg class="b" style="left:980px;top:591px" width="11" height="12" viewBox="0 0 11 12"><path d="M3.5 3 V1.5 H7.5 V3" fill="none" stroke="#111" stroke-width="1"/><path d="M0.5 3.5 H10.5" stroke="#111" stroke-width="1.2"/><path d="M1.5 4 V10.5 Q1.5 11.5 2.5 11.5 H8.5 Q9.5 11.5 9.5 10.5 V4" fill="none" stroke="#111" stroke-width="1.1"/><path d="M3.5 5.5 V10 M5.5 5.5 V10 M7.5 5.5 V10" stroke="#222" stroke-width="0.9"/></svg>
<div class="a" style="left:973.50px;top:617.07px;font-size:7px;font-weight:normal;color:#888;font-style:normal;letter-spacing:0px;">1896ms</div>
<div class="b" style="left:666px;top:635px;width:333px;height:47px;border:1px solid #649936;box-sizing:border-box;background:#fff"></div>
<div class="a" style="left:682.30px;top:648.67px;font-size:20px;font-weight:bold;color:#111;font-style:normal;letter-spacing:-0.6px;-webkit-text-stroke:0.45px #111;">Expired Secrets</div>
<div class="b" style="left:682px;top:671.1px;width:60px;height:3px;background:#79bf3d"></div>
<svg class="b" style="left:948px;top:648px" width="14" height="12" viewBox="0 0 14 12"><path d="M5.5 1.6 H1.8 Q0.9 1.6 0.9 2.5 V9.8 Q0.9 10.7 1.8 10.7 H9 Q9.9 10.7 9.9 9.8 V6.5" fill="none" stroke="#111" stroke-width="1.3"/><path d="M5.2 7.2 L10.5 1.9" stroke="#111" stroke-width="1.5"/><path d="M7.3 0.2 H12.6 V5.5 Z" fill="#111"/></svg>
<svg class="b" style="left:964.5px;top:648px" width="12" height="12" viewBox="0 0 12 12"><path d="M2 5.2 A4.2 4.2 0 0 1 9.2 3.6" fill="none" stroke="#111" stroke-width="2.1"/><path d="M11.2 1 V5.8 H6.4 Z" fill="#111"/><path d="M10 6.8 A4.2 4.2 0 0 1 2.8 8.4" fill="none" stroke="#111" stroke-width="2.1"/><path d="M0.8 11 V6.2 H5.6 Z" fill="#111"/></svg>
<svg class="b" style="left:980px;top:648px" width="11" height="12" viewBox="0 0 11 12"><path d="M3.5 3 V1.5 H7.5 V3" fill="none" stroke="#111" stroke-width="1"/><path d="M0.5 3.5 H10.5" stroke="#111" stroke-width="1.2"/><path d="M1.5 4 V10.5 Q1.5 11.5 2.5 11.5 H8.5 Q9.5 11.5 9.5 10.5 V4" fill="none" stroke="#111" stroke-width="1.1"/><path d="M3.5 5.5 V10 M5.5 5.5 V10 M7.5 5.5 V10" stroke="#222" stroke-width="0.9"/></svg>
<div class="a" style="left:973.50px;top:674.07px;font-size:7px;font-weight:normal;color:#888;font-style:normal;letter-spacing:0px;">1346ms</div>
</body></html>
